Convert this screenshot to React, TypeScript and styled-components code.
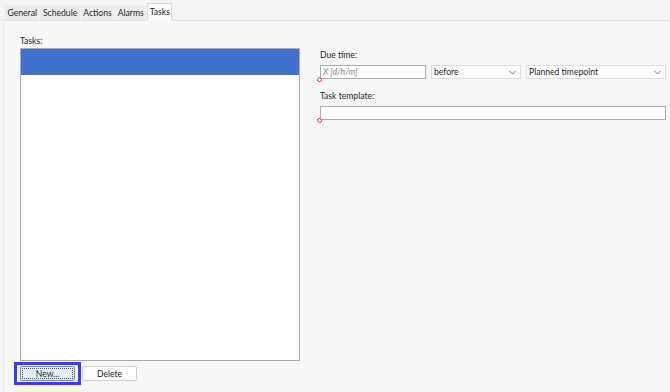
import React from "react";
import styled, { createGlobalStyle } from "styled-components";

const Global = createGlobalStyle`
  html, body { margin: 0; padding: 0; background: #f4f4f4; }
  body { font-family: Lato, "Open Sans", sans-serif; font-size: 8.6px; color: #1e1e1e; }
`;

const Page = styled.div`
  width: 670px;
  height: 392px;
  display: flex;
  flex-direction: column;
  overflow: hidden;
  background: #f4f4f4;
`;

const TabStrip = styled.div`
  display: flex;
  align-items: flex-end;
  height: 20px;
  padding-left: 5px;
  box-sizing: border-box;
`;

const Tab = styled.div<{ $active?: boolean }>`
  height: ${(p) => (p.$active ? "18px" : "15px")};
  padding: 0 1.5px;
  margin-right: 1px;
  box-sizing: border-box;
  display: flex;
  align-items: center;
  background: ${(p) => (p.$active ? "#fbfbfb" : "#ececec")};
  border: 1px solid ${(p) => (p.$active ? "#d9d9d9" : "#ececec")};
  border-bottom: ${(p) => (p.$active ? "1px solid #fbfbfb" : "none")};
  margin-bottom: ${(p) => (p.$active ? "-1px" : "0")};
  position: relative;
  z-index: ${(p) => (p.$active ? 1 : 0)};
  font-size: 8.6px;
  line-height: 1;
`;

const Panel = styled.div`
  flex: 1;
  margin-left: 3px;
  border-top: 1px solid #e0e0e0;
  border-left: 1px solid #e6e6e6;
  background: #f7f7f7;
  display: flex;
  padding: 15px 5px 0 16px;
  box-sizing: border-box;
`;

const LeftCol = styled.div`
  width: 280px;
  display: flex;
  flex-direction: column;
`;

const Label = styled.div<{ $gap?: number }>`
  font-size: 8.6px;
  line-height: 11px;
  height: 11px;
  margin-bottom: ${(p) => p.$gap ?? 4}px;
`;

const ListBox = styled.div`
  width: 280px;
  height: 313px;
  box-sizing: border-box;
  border: 1px solid #a9a9a9;
  background: #ffffff;
`;

const SelectedRow = styled.div`
  height: 26px;
  background: #3f6fcf;
`;

const ButtonRow = styled.div`
  display: flex;
  align-items: center;
  margin-left: -6px;
  margin-top: 1px;
  gap: 1px;
`;

const FocusRing = styled.div`
  border: 3px solid #3b3bf5;
  padding: 1px 3px;
  display: flex;
`;

const Button = styled.button<{ $focused?: boolean }>`
  width: 55px;
  height: 15px;
  padding: 0;
  font-family: inherit;
  font-size: 8.6px;
  color: #1e1e1e;
  background: ${(p) => (p.$focused ? "#e4eefa" : "#fdfdfd")};
  border: 1px solid ${(p) => (p.$focused ? "#6f8fb5" : "#cfcfcf")};
  outline: ${(p) => (p.$focused ? "1px dotted #555" : "none")};
  outline-offset: -3px;
  border-radius: 2px;
`;

const RightCol = styled.div`
  flex: 1;
  margin-left: 20px;
  padding-top: 14px;
  display: flex;
  flex-direction: column;
`;

const FieldRow = styled.div`
  display: flex;
  gap: 5px;
  position: relative;
  margin-bottom: 12px;
`;

const TextInput = styled.div<{ $w?: number }>`
  width: ${(p) => (p.$w ? `${p.$w}px` : "auto")};
  flex: ${(p) => (p.$w ? "none" : "1")};
  height: 14px;
  box-sizing: border-box;
  border: 1px solid #acacac;
  background: #ffffff;
  font-size: 8.6px;
  line-height: 12px;
  padding-left: 2px;
  color: #8a8a8a;
  font-style: italic;
`;

const Select = styled.div<{ $w: number }>`
  width: ${(p) => p.$w}px;
  height: 14px;
  box-sizing: border-box;
  border: 1px solid #dcdcdc;
  background: #ffffff;
  display: flex;
  align-items: center;
  justify-content: space-between;
  padding: 0 4px 0 2px;
  font-size: 8.6px;
  color: #1e1e1e;
`;

const ErrorDot = styled.div`
  position: absolute;
  left: -3px;
  bottom: -3px;
  width: 3px;
  height: 3px;
  border: 1.5px solid #d9382e;
  border-radius: 50%;
  background: #ffffff;
`;

const Chevron = () => (
  <svg width="7" height="5" viewBox="0 0 7 5">
    <path d="M0.5 1 L3.5 4 L6.5 1" fill="none" stroke="#777" strokeWidth="1" />
  </svg>
);

export default function App() {
  return (
    <Page>
      <Global />
      <TabStrip>
        <Tab>General</Tab>
        <Tab>Schedule</Tab>
        <Tab>Actions</Tab>
        <Tab>Alarms</Tab>
        <Tab $active>Tasks</Tab>
      </TabStrip>
      <Panel>
        <LeftCol>
          <Label $gap={1}>Tasks:</Label>
          <ListBox>
            <SelectedRow />
          </ListBox>
          <ButtonRow>
            <FocusRing>
              <Button $focused>New...</Button>
            </FocusRing>
            <Button>Delete</Button>
          </ButtonRow>
        </LeftCol>
        <RightCol>
          <Label>Due time:</Label>
          <FieldRow>
            <TextInput $w={106}>X [d/h/m]</TextInput>
            <Select $w={90}>
              before
              <Chevron />
            </Select>
            <Select $w={140}>
              Planned timepoint
              <Chevron />
            </Select>
            <ErrorDot />
          </FieldRow>
          <Label>Task template:</Label>
          <FieldRow>
            <TextInput />
            <ErrorDot />
          </FieldRow>
        </RightCol>
      </Panel>
    </Page>
  );
}
